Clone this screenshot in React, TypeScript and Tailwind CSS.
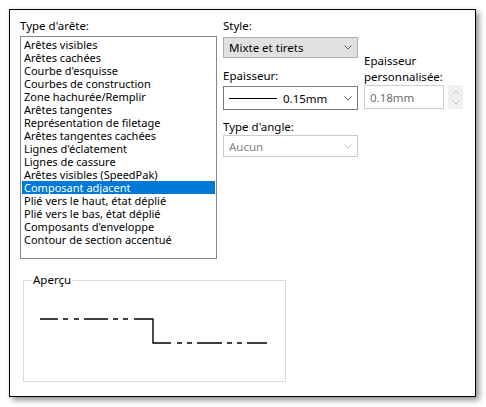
import React from 'react';

const edgeTypes = [
    'Arêtes visibles',
    'Arêtes cachées',
    "Courbe d'esquisse",
    'Courbes de construction',
    'Zone hachurée/Remplir',
    'Arêtes tangentes',
    'Représentation de filetage',
    'Arêtes tangentes cachées',
    "Lignes d'éclatement",
    'Lignes de cassure',
    'Arêtes visibles (SpeedPak)',
    'Composant adjacent',
    'Plié vers le haut, état déplié',
    'Plié vers le bas, état déplié',
    "Composants d'enveloppe",
    'Contour de section accentué',
];

const SELECTED = 'Composant adjacent';

function Chevron({ color = '#606060' }: { color?: string }) {
    return (
        <svg width="8" height="5" viewBox="0 0 8 5" className="shrink-0">
            <path d="M0.5 0.5 L4 4 L7.5 0.5" fill="none" stroke={color} strokeWidth="1" />
        </svg>
    );
}

export default function App() {
    return (
        <div className="w-[486px] h-[407px] bg-white pl-[9px] pt-[9px] text-[11px] leading-[13px] text-black" style={{ fontFamily: '"Noto Sans", "Liberation Sans", sans-serif' }}>
            <div className="w-[467px] h-[388px] border border-black bg-white shadow-[3px_3px_6px_rgba(0,0,0,0.45)] pl-[10px] pt-[8px]">
                <div className="flex">
                    {/* Edge type list */}
                    <div className="flex flex-col">
                        <div className="h-[18px] leading-[16px] text-[11.5px]">Type d'arête:</div>
                        <div className="w-[197px] h-[223px] border border-[#828790] pt-[1px] px-[1px]">
                            {edgeTypes.map(item => (
                                <div
                                    key={item}
                                    className={item === SELECTED
                                        ? 'h-[13px] pl-[2px] bg-[#0078d7] text-white whitespace-nowrap'
                                        : 'h-[13px] pl-[2px] whitespace-nowrap'}
                                >
                                    {item}
                                </div>
                            ))}
                        </div>
                    </div>

                    {/* Style / thickness / angle */}
                    <div className="ml-[6px] flex flex-col w-[135px] text-[11.5px]">
                        <div className="h-[16px] leading-[16px]">Style:</div>
                        <div className="mt-[3px] h-[21px] border border-[#adadad] bg-[#e1e1e1] flex items-center justify-between pl-[5px] pr-[5px]">
                            <span>Mixte et tirets</span>
                            <Chevron />
                        </div>
                        <div className="mt-[10px] h-[16px] leading-[16px]">Epaisseur:</div>
                        <div className="mt-[2px] h-[24px] border border-[#7a7a7a] flex items-center pl-[5px] pr-[5px]">
                            <span className="w-[48px] h-px bg-black shrink-0" />
                            <span className="ml-[6px] flex-1">0.15mm</span>
                            <Chevron />
                        </div>
                        <div className="mt-[9px] h-[16px] leading-[16px]">Type d'angle:</div>
                        <div className="h-[22px] border border-[#cccccc] flex items-center justify-between pl-[5px] pr-[5px] text-[#838383]">
                            <span>Aucun</span>
                            <Chevron color="#bfbfbf" />
                        </div>
                    </div>

                    {/* Custom thickness */}
                    <div className="ml-[6px] mt-[35px] flex flex-col text-[11.5px]">
                        <div className="leading-[16px]">Epaisseur<br />personnalisée:</div>
                        <div className="flex gap-[4px]">
                            <div className="w-[80px] h-[24px] border border-[#cccccc] pl-[5px] flex items-center text-[#6d6d6d]">
                                0.18mm
                            </div>
                            <div className="w-[15px] h-[24px] bg-[#f0f0f0] flex flex-col items-center justify-center gap-[5px]">
                                <svg width="8" height="5" viewBox="0 0 8 5">
                                    <path d="M0.5 4.5 L4 1 L7.5 4.5" fill="none" stroke="#c4c4c4" strokeWidth="1" />
                                </svg>
                                <svg width="8" height="5" viewBox="0 0 8 5">
                                    <path d="M0.5 0.5 L4 4 L7.5 0.5" fill="none" stroke="#c4c4c4" strokeWidth="1" />
                                </svg>
                            </div>
                        </div>
                    </div>
                </div>

                {/* Preview */}
                <div className="relative ml-[3px] mt-[21px] w-[263px] h-[102px] border border-[#dcdcdc]">
                    <span className="absolute left-[8px] top-[-9px] bg-white px-px leading-[16px] text-[11.5px]">Aperçu</span>
                    <svg width="261" height="100" className="block">
                        <g stroke="#000" strokeWidth="1.4" fill="none">
                            <path d="M16 38 H34 M39 38 H44 M50 38 H55 M60 38 H84 M89 38 H94 M99 38 H104 M110 38 H129 V62 H147 M153 62 H158 M163 62 H168 M173 62 H198 M203 62 H208 M213 62 H218 M223 62 H243" />
                        </g>
                    </svg>
                </div>
            </div>
        </div>
    );
}
